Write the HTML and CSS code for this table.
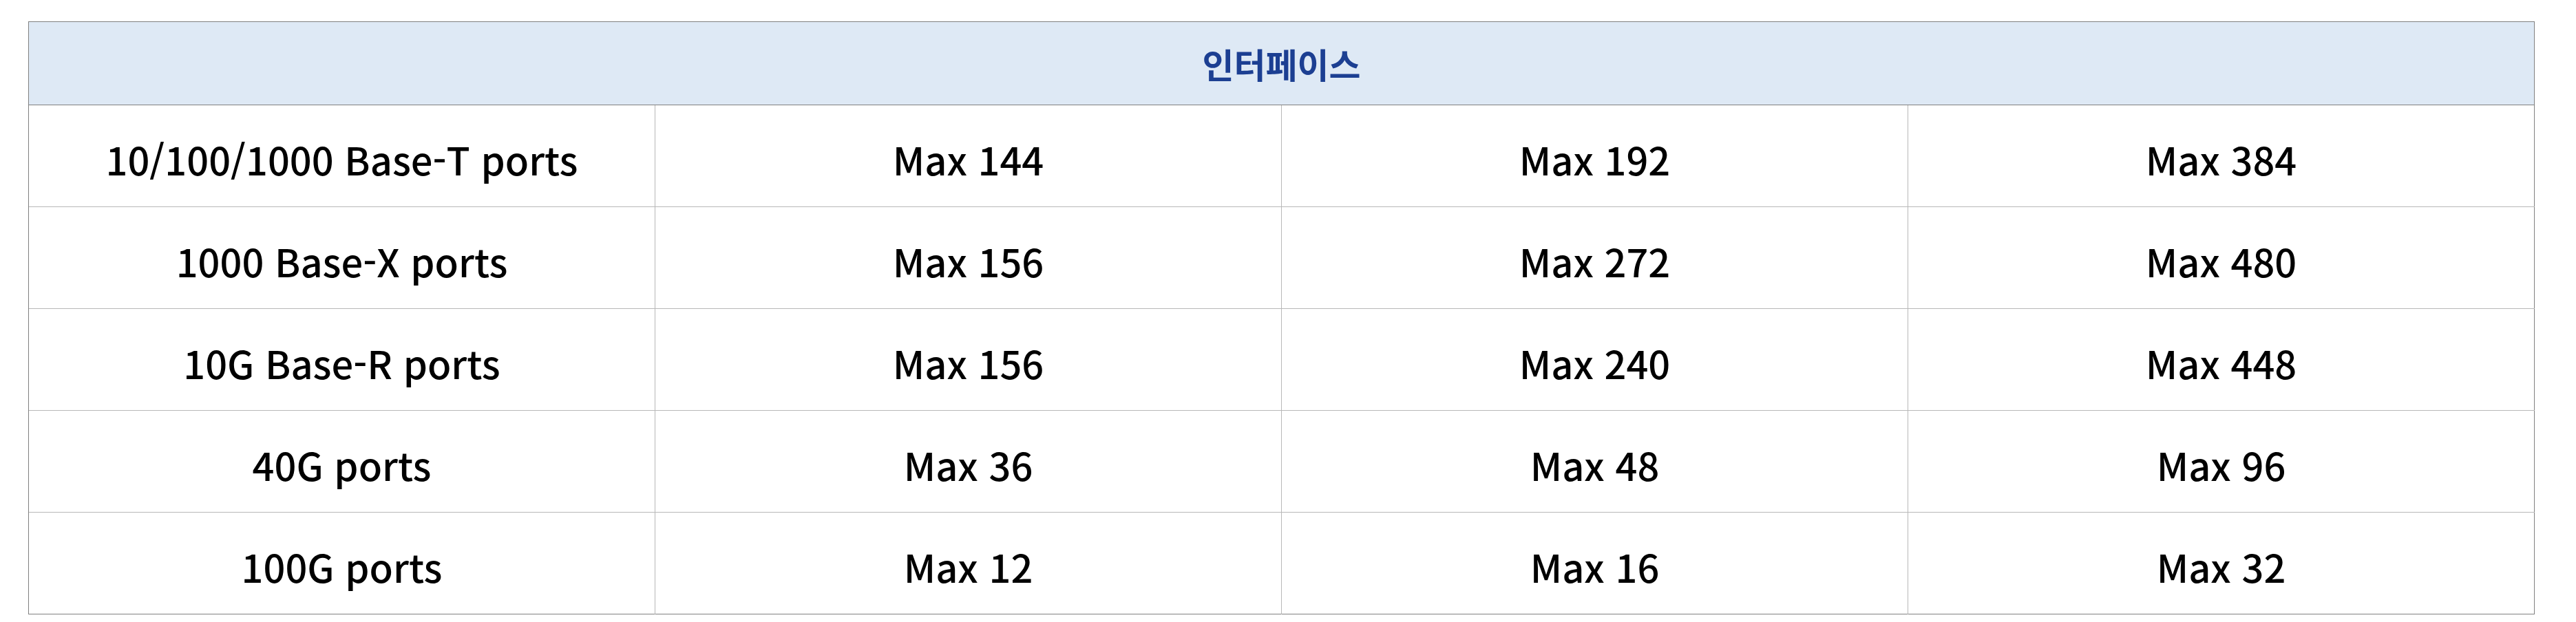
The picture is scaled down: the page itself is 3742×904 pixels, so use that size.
FILE: index.html
```html
<!DOCTYPE html>
<html lang="ko">
<head>
<meta charset="utf-8">
<title>인터페이스</title>
<link rel="stylesheet" href="styles.css">
</head>
<body>
<table class="spec">
  <thead>
    <tr><th class="spec-head" colspan="4">인터페이스</th></tr>
  </thead>
  <tbody>
    <tr><td>10/100/1000 Base-T ports</td><td>Max 144</td><td>Max 192</td><td>Max 384</td></tr>
    <tr><td>1000 Base-X ports</td><td>Max 156</td><td>Max 272</td><td>Max 480</td></tr>
    <tr><td>10G Base-R ports</td><td>Max 156</td><td>Max 240</td><td>Max 448</td></tr>
    <tr><td>40G ports</td><td>Max 36</td><td>Max 48</td><td>Max 96</td></tr>
    <tr><td>100G ports</td><td>Max 12</td><td>Max 16</td><td>Max 32</td></tr>
  </tbody>
</table>
</body>
</html>
```
FILE: styles.css
```css
html, body {
  margin: 0;
  padding: 0;
  background: #ffffff;
}

body {
  font-family: "Noto Sans CJK KR", "Noto Sans", sans-serif;
  color: #000000;
}

.spec {
  margin: 31px 0 0 41px;
  width: 3641px;
  table-layout: fixed;
  border-collapse: collapse;
  border: 1px solid #808080;
}

.spec-head {
  height: 120px;
  padding: 0;
  background: #dee9f5;
  color: #1c3f92;
  font-size: 50px;
  font-weight: 700;
  text-align: center;
  vertical-align: middle;
  border-bottom: 1px solid #808080;
  line-height: 1;
}

.spec td {
  height: 148px;
  padding: 8px 0 0 0;
  box-sizing: border-box;
  text-align: center;
  vertical-align: middle;
  font-size: 56px;
  font-weight: 500;
  line-height: 1.2;
  border-left: 1px solid #b8b8b8;
  border-top: 1px solid #b8b8b8;
}

.spec td:first-child {
  border-left: 1px solid #808080;
}
```
